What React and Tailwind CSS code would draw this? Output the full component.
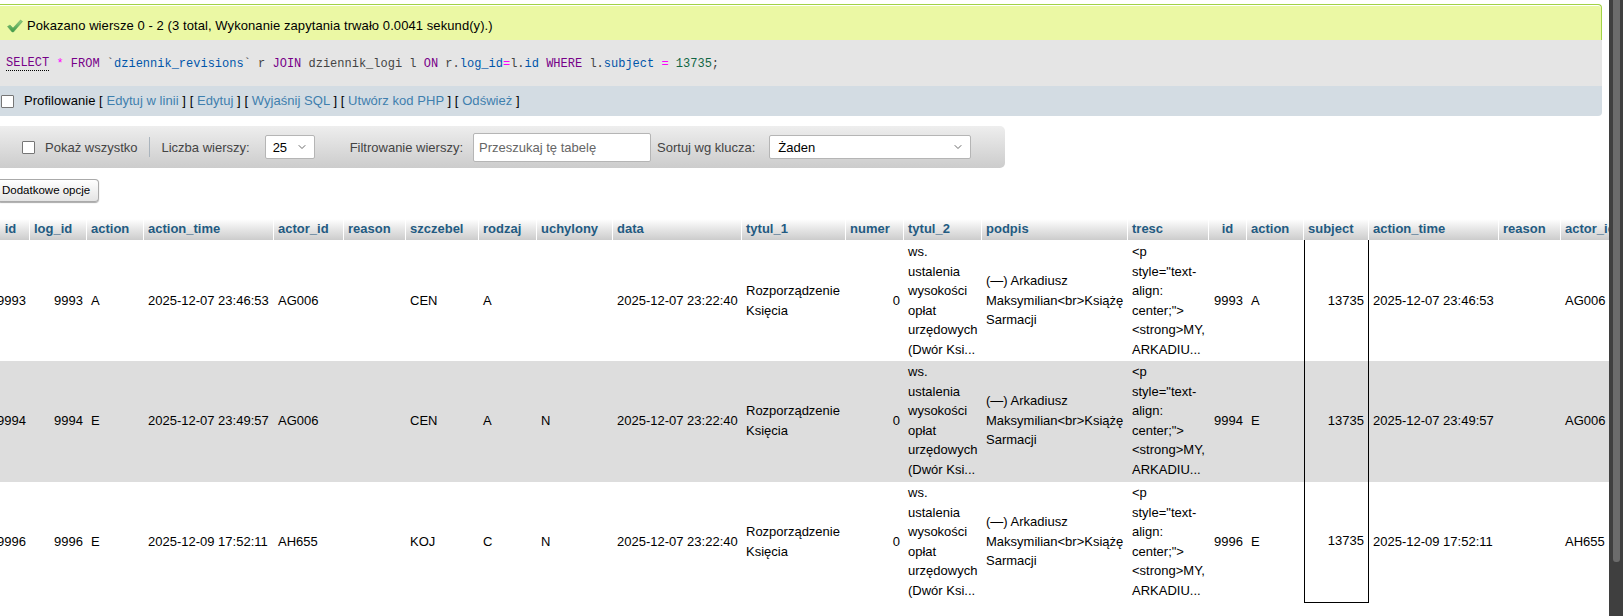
import { ChevronDown } from "lucide-react";

const COLS = [
  { label: "id", w: "w-[38px]", center: true, right: true },
  { label: "log_id", w: "w-[57px]", right: true },
  { label: "action", w: "w-[57px]" },
  { label: "action_time", w: "w-[130px]" },
  { label: "actor_id", w: "w-[70px]" },
  { label: "reason", w: "w-[62px]" },
  { label: "szczebel", w: "w-[73px]" },
  { label: "rodzaj", w: "w-[58px]" },
  { label: "uchylony", w: "w-[76px]" },
  { label: "data", w: "w-[129px]" },
  { label: "tytul_1", w: "w-[104px]" },
  { label: "numer", w: "w-[58px]", right: true },
  { label: "tytul_2", w: "w-[78px]" },
  { label: "podpis", w: "w-[146px]" },
  { label: "tresc", w: "w-[81px]" },
  { label: "id", w: "w-[38px]", center: true, right: true },
  { label: "action", w: "w-[57px]" },
  { label: "subject", w: "w-[65px]", right: true, boxed: true },
  { label: "action_time", w: "w-[130px]" },
  { label: "reason", w: "w-[62px]" },
  { label: "actor_id", w: "w-[80px]" },
];

const TYTUL = "ws. ustalenia wysokości opłat urzędowych (Dwór Ksi...";
const PODPIS = "(—) Arkadiusz Maksymilian<br>Książę Sarmacji";
const TRESC = '<p style="text-align: center;"> <strong>MY, ARKADIU...';

const row = (id, action, time, actor, szczebel, rodzaj, uchylony) => [
  id, id, action, time, actor, "", szczebel, rodzaj, uchylony,
  "2025-12-07 23:22:40", "Rozporządzenie Księcia", "0", TYTUL, PODPIS, TRESC,
  id, action, "13735", time, "", actor,
];

const ROWS = [
  row("9993", "A", "2025-12-07 23:46:53", "AG006", "CEN", "A", ""),
  row("9994", "E", "2025-12-07 23:49:57", "AG006", "CEN", "A", "N"),
  row("9996", "E", "2025-12-09 17:52:11", "AH655", "KOJ", "C", "N"),
];

const Kw = ({ children }) => <span className="text-[#770088]">{children}</span>;
const Op = ({ children }) => <span className="text-[#ff00ff]">{children}</span>;
const Nm = ({ children }) => <span className="text-[#0055aa]">{children}</span>;

const Box = () => (
  <span className="w-[13px] h-[13px] shrink-0 border border-[#767676] rounded-[1px] bg-white" />
);

const Link = ({ children }) => <a className="text-[#3f7fae]">{children}</a>;

const Select = ({ value, className }) => (
  <div className={`h-[24px] flex items-center justify-between bg-white border border-[#b5b5b5] rounded-[2px] text-[13px] text-black ${className}`}>
    <span className="pt-[1px]">{value}</span>
    <ChevronDown size={12} strokeWidth={1.75} className="text-[#555]" />
  </div>
);

const App = () => {
  return (
    <div className="flex h-[616px] w-full overflow-hidden bg-white text-[13px] text-black font-['Liberation_Sans',Arial,sans-serif]">
      <div className="flex-1 min-w-0 overflow-hidden pt-[4px]">
        {/* Messages */}
        <div className="mr-[7px]">
          <div className="h-[36px] pt-[6px] pl-[7px] flex items-center gap-[4px] tracking-[0.08px] bg-[#ebf8a4] border-t border-r border-[#a2d246] rounded-tr-[4px] shadow-[inset_0_1px_0_#fff]">
            <svg width="16" height="14" viewBox="0 0 16 14" className="shrink-0">
              <defs>
                <linearGradient id="chk" x1="0" y1="0" x2="0" y2="1">
                  <stop offset="0" stopColor="#8fcf7f" />
                  <stop offset="1" stopColor="#3f9a45" />
                </linearGradient>
              </defs>
              <path d="M0.5 7.5 L3 6 L6 9 L13.5 1 L15.5 2.5 L6.5 13 L5 13 Z" fill="url(#chk)" stroke="#5f9f5f" strokeWidth="0.5" />
            </svg>
            <span>Pokazano wiersze 0 - 2 (3 total, Wykonanie zapytania trwało 0.0041 sekund(y).)</span>
          </div>
          <div className="h-[46px] pl-[6px] pt-[2px] flex items-center bg-[#e5e5e5] text-[#444] whitespace-pre text-[12px] leading-[13px] font-['Liberation_Mono',monospace]">
            <span className="text-[#770088] border-b border-dotted border-black">SELECT</span>
            <span> <Op>*</Op> <Kw>FROM</Kw> `<Nm>dziennik_revisions</Nm>` r <Kw>JOIN</Kw> dziennik_logi l <Kw>ON</Kw> r.<Nm>log_id</Nm><Op>=</Op>l.<Nm>id</Nm> <Kw>WHERE</Kw> l.<Nm>subject</Nm> <Op>=</Op> <span className="text-[#116644]">13735</span>;</span>
          </div>
          <div className="h-[30px] pl-[1px] flex items-center gap-[10px] tracking-[0.05px] bg-[#d3dce3] rounded-br-[4px]">
            <Box />
            <span>
              Profilowanie [ <Link>Edytuj w linii</Link> ] [ <Link>Edytuj</Link> ] [ <Link>Wyjaśnij SQL</Link> ] [ <Link>Utwórz kod PHP</Link> ] [ <Link>Odśwież</Link> ]
            </span>
          </div>
        </div>

        {/* Toolbar */}
        <div className="mt-[10px] w-[1005px] h-[42px] flex items-center pl-[22px] bg-gradient-to-b from-[#eeeeee] to-[#cccccc] rounded-r-[5px] text-[13px] text-[#444]">
          <Box />
          <span className="ml-[10px] pt-[1px]">Pokaż wszystko</span>
          <span className="ml-[12px] w-px h-[20px] bg-[#aab4bd]" />
          <span className="ml-[11px] pt-[1px]">Liczba wierszy:</span>
          <Select value="25" className="ml-[15px] w-[50px] pl-[7px] pr-[6px]" />
          <span className="ml-[35px] pt-[1px]">Filtrowanie wierszy:</span>
          <input
            placeholder="Przeszukaj tę tabelę"
            className="ml-[10px] w-[178px] h-[29px] px-[5px] bg-white border border-[#b5b5b5] rounded-[2px] text-[13px] placeholder:text-[#666] outline-none"
          />
          <span className="ml-[6px] pt-[1px]">Sortuj wg klucza:</span>
          <Select value="Żaden" className="ml-[14px] w-[202px] pl-[8px] pr-[6px]" />
        </div>

        <button className="mt-[11px] h-[23px] w-[99px] block pl-[2px] text-left border border-[#aaaaaa] border-l-0 rounded-r-[4px] bg-gradient-to-b from-[#ffffff] to-[#e4e4e4] shadow-[0_1px_1px_#aaa] text-[11.5px] text-black">
          Dodatkowe opcje
        </button>

        {/* Results */}
        <table className="mt-[17px] ml-[-8px] table-fixed w-[1649px] border-separate border-spacing-0 leading-[19.5px]">
          <colgroup>
            {COLS.map((c, i) => (
              <col key={i} className={c.w} />
            ))}
          </colgroup>
          <thead>
            <tr>
              {COLS.map((c, i) => (
                <th
                  key={i}
                  className={`h-[21px] px-[4px] pb-[1px] font-bold text-[#235a81] whitespace-nowrap bg-gradient-to-b from-[#ffffff] to-[#cccccc] border-r border-white ${c.center ? "text-center" : "text-left"}`}
                >
                  {c.label}
                </th>
              ))}
            </tr>
          </thead>
          <tbody>
            {ROWS.map((cells, r) => (
              <tr key={r} className={r === 1 ? "bg-[#dddddd]" : "bg-white"}>
                {cells.map((v, i) => (
                  <td
                    key={i}
                    className={`h-[121px] px-[4px] align-middle ${r === 0 ? "py-[2px]" : "pt-[1px] pb-[3px]"} ${COLS[i].right ? "text-right" : "text-left"} ${COLS[i].boxed ? "border-x border-black" : ""} ${COLS[i].boxed && r === 2 ? "border-b" : ""}`}
                  >
                    {v}
                  </td>
                ))}
              </tr>
            ))}
          </tbody>
        </table>
      </div>

      {/* Window scrollbar */}
      <div className="w-[14px] h-full shrink-0 flex justify-center bg-[#3f3f3f]">
        <div className="w-[7px] h-[562px] bg-[#6b6b6b] rounded-b-[3px]" />
      </div>
    </div>
  );
};

export default App;
